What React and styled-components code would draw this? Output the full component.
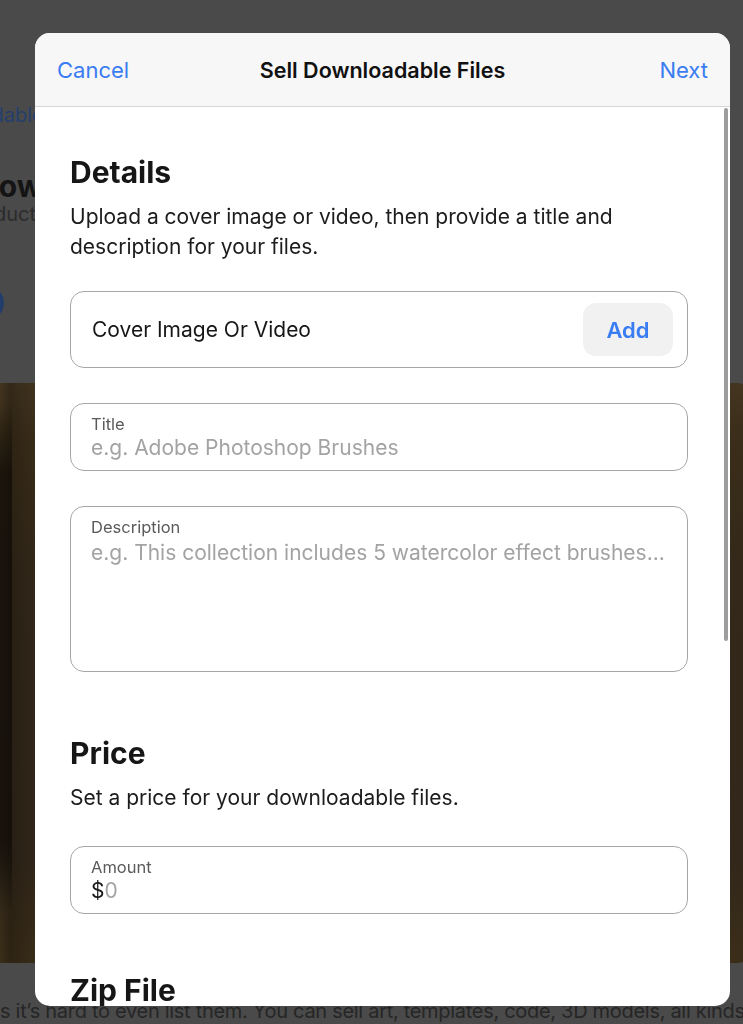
import styled, { createGlobalStyle } from "styled-components";

const blue = "#3a7cf2";

const GlobalStyle = createGlobalStyle`
  html, body {
    margin: 0;
    height: 100%;
    overflow: hidden;
    background: #4a4a4a;
  }
  * {
    box-sizing: border-box;
  }
  body {
    font-family: Inter, "Noto Sans", "Liberation Sans", sans-serif;
    -webkit-font-smoothing: antialiased;
  }
`;

/* dimmed page behind the sheet */
const DimmedPage = styled.div`
  height: 1024px;
  background: #4a4a4a;
  display: flex;
  flex-direction: column;
  overflow: hidden;
  padding-top: 102px;
`;

const PageColumn = styled.div`
  display: flex;
  flex-direction: column;
`;

const Crumb = styled.div`
  margin-left: -91px;
  font-size: 20px;
  line-height: 26px;
  color: #253f6b;
  white-space: nowrap;
`;

const PageHeading = styled.div`
  margin-top: 40px;
  margin-left: -23px;
  font-size: 30px;
  font-weight: 700;
  line-height: 36px;
  color: #141414;
  white-space: nowrap;
`;

const PageSub = styled.div`
  margin-top: -4px;
  margin-left: -38px;
  font-size: 20px;
  line-height: 28px;
  color: #2c2c2c;
  white-space: nowrap;
`;

const Dot = styled.div`
  margin-top: 58px;
  margin-left: -30px;
  width: 34px;
  height: 34px;
  border-radius: 50%;
  background: #223d6c;
`;

const Hero = styled.div`
  flex: none;
  margin: 63px -12px 0 -30px;
  height: 580px;
  border-radius: 18px;
  background:
    linear-gradient(180deg, transparent 20px, rgba(8, 6, 3, 0.6) 90px, rgba(8, 6, 3, 0.6) 460px, transparent 530px) 0 0 / 42px 100% no-repeat,
    linear-gradient(90deg, transparent 30px, rgba(8, 6, 3, 0.25) 40px, transparent 70px),
    linear-gradient(180deg, #433520 0px, #3a2d19 60px, #33281a 200px, #32271a 480px, #3b2e19 580px);
`;

const PageText = styled.div`
  margin-top: 35px;
  white-space: nowrap;
  font-size: 20px;
  line-height: 26px;
  color: #262626;
  letter-spacing: -0.3px;
`;

/* sheet */
const Sheet = styled.div`
  position: fixed;
  left: 35px;
  top: 33px;
  width: 695px;
  height: 973px;
  border-radius: 15px;
  overflow: hidden;
  background: #fff;
  display: flex;
  flex-direction: column;
`;

const NavBar = styled.div`
  flex: none;
  height: 74px;
  padding: 0 22px;
  background: #f7f7f7;
  border-bottom: 1px solid #d6d6d6;
  display: grid;
  grid-template-columns: 1fr auto 1fr;
  align-items: center;
`;

const NavButton = styled.button`
  justify-self: ${({ $end }) => ($end ? "end" : "start")};
  border: 0;
  padding: 0;
  background: none;
  font-family: inherit;
  font-size: 22px;
  color: ${blue};
  cursor: pointer;
`;

const NavTitle = styled.div`
  font-size: 21.5px;
  font-weight: 600;
  color: #111;
`;

const Body = styled.div`
  position: relative;
  flex: 1;
  overflow: hidden;
  padding: 48px 42px 0 35px;
`;

const ScrollThumb = styled.div`
  position: absolute;
  right: 2px;
  top: 1px;
  width: 4px;
  height: 533px;
  border-radius: 2px;
  background: #9d9d9d;
`;

const SectionTitle = styled.h2`
  margin: ${({ $gap }) => $gap || 0}px 0 0;
  font-size: 30px;
  font-weight: 700;
  line-height: 34px;
  color: #161616;
`;

const SectionText = styled.p`
  margin: 13px 0 0;
  font-size: 21px;
  line-height: 30px;
  color: #1c1c1c;
`;

const Field = styled.div`
  margin-top: ${({ $gap }) => $gap}px;
  height: ${({ $h }) => $h}px;
  border: 1px solid #a6a6a6;
  border-radius: 14px;
  padding: 9px 20px 0;
  display: flex;
  flex-direction: column;
`;

const UploadRow = styled.div`
  margin-top: 29px;
  height: 77px;
  border: 1px solid #a6a6a6;
  border-radius: 14px;
  padding: 0 14px 0 21px;
  display: flex;
  align-items: center;
  justify-content: space-between;
`;

const UploadLabel = styled.span`
  font-size: 21px;
  color: #161616;
`;

const AddButton = styled.button`
  width: 90px;
  height: 53px;
  border: 0;
  border-radius: 13px;
  background: #f1f1f1;
  font-family: inherit;
  font-size: 22px;
  font-weight: 600;
  color: ${blue};
  cursor: pointer;
`;

const FieldLabel = styled.label`
  font-size: 16.5px;
  line-height: 22px;
  color: #5a5a5a;
`;

const Placeholder = styled.div`
  margin-top: ${({ $gap }) => $gap || 0}px;
  font-size: 21px;
  line-height: 26px;
  color: #a3a3a3;
  white-space: nowrap;
`;

const Currency = styled.span`
  color: #161616;
`;

export default function App() {
  return (
    <>
      <GlobalStyle />
      <DimmedPage>
        <PageColumn>
          <Crumb>Downloadable Files</Crumb>
          <PageHeading>Downloadable Files</PageHeading>
          <PageSub>Products</PageSub>
          <Dot />
        </PageColumn>
        <Hero />
        <PageText>
          s it’s hard to even list them. You can sell art, templates, code, 3D models, all kinds
        </PageText>
      </DimmedPage>

      <Sheet>
        <NavBar>
          <NavButton>Cancel</NavButton>
          <NavTitle>Sell Downloadable Files</NavTitle>
          <NavButton $end>Next</NavButton>
        </NavBar>

        <Body>
          <ScrollThumb />

          <SectionTitle>Details</SectionTitle>
          <SectionText>
            Upload a cover image or video, then provide a title and
            <br />
            description for your files.
          </SectionText>

          <UploadRow>
            <UploadLabel>Cover Image Or Video</UploadLabel>
            <AddButton>Add</AddButton>
          </UploadRow>

          <Field $gap={35} $h={68}>
            <FieldLabel>Title</FieldLabel>
            <Placeholder>e.g. Adobe Photoshop Brushes</Placeholder>
          </Field>

          <Field $gap={35} $h={166}>
            <FieldLabel>Description</FieldLabel>
            <Placeholder $gap={2}>
              e.g. This collection includes 5 watercolor effect brushes...
            </Placeholder>
          </Field>

          <SectionTitle $gap={64}>Price</SectionTitle>
          <SectionText>Set a price for your downloadable files.</SectionText>

          <Field $gap={33} $h={68}>
            <FieldLabel>Amount</FieldLabel>
            <Placeholder>
              <Currency>$</Currency>0
            </Placeholder>
          </Field>

          <SectionTitle $gap={59}>Zip File</SectionTitle>
        </Body>
      </Sheet>
    </>
  );
}
